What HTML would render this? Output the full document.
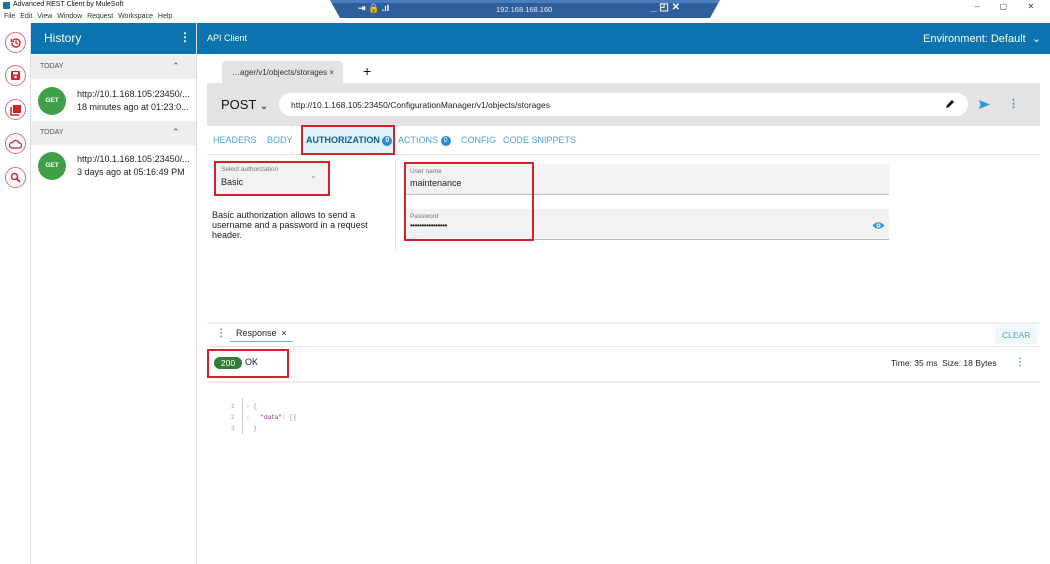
<!DOCTYPE html>
<html><head><style>
*{box-sizing:border-box;margin:0;padding:0}
body{width:1050px;height:564px;position:relative;overflow:hidden;background:#fff;font-family:"Liberation Sans",sans-serif;color:#222}
.a{position:absolute}
.circ{position:absolute;left:5px;width:21px;height:21px;border:1.5px solid #e06a80;border-radius:50%;display:flex;align-items:center;justify-content:center}
.red{position:absolute;border:2px solid #d2232a}
.tab{position:absolute;top:135px;font-size:9px;color:#4aa3d9}
.badge{display:inline-block;width:10px;height:10px;border-radius:50%;background:#2a8ad6;color:#fff;font-size:7px;text-align:center;line-height:10px;vertical-align:middle}
</style></head><body>
<!-- title bar -->
<div class="a" style="left:3px;top:2px;width:7px;height:7px;background:#1b6fa8;border-radius:1px"></div>
<div class="a" style="left:13px;top:1px;font-size:7px;color:#111">Advanced REST Client by MuleSoft</div>
<div class="a" style="left:4px;top:13px;font-size:7px;color:#333;word-spacing:3px">File Edit View Window Request Workspace Help</div>
<svg class="a" style="left:330px;top:0" width="390" height="19"><polygon points="0,0 390,0 380,18 10,18" fill="#2f5e9c"/><polygon points="0,0 390,0 388,3 2,3" fill="#4a7bbd"/></svg>
<div class="a" style="left:358px;top:3px;font-size:9px;color:#fff;font-weight:bold">⇥ 🔒 .ıl</div>
<div class="a" style="left:496px;top:5px;font-size:7.5px;color:#e8eef8">192.168.168.160</div>
<div class="a" style="left:651px;top:2px;font-size:10px;color:#fff;font-weight:bold">_ ◰ ✕</div>
<div class="a" style="left:975px;top:2px;font-size:8px;color:#333;word-spacing:18px">– ▢ ✕</div>
<!-- left rail -->
<div class="a" style="left:30px;top:23px;width:1px;height:541px;background:#ddd"></div>
<div class="circ" style="top:32px"><svg width="12" height="12" viewBox="0 0 12 12"><path d="M2 6a4 4 0 1 0 1.2-2.8M1.5 2v2.5H4M6 3.5V6l2 1" stroke="#d2232a" stroke-width="1.4" fill="none"/></svg></div>
<div class="circ" style="top:65px"><svg width="11" height="11"><rect x="1" y="1" width="9" height="9" rx="1" fill="#d2232a"/><rect x="3" y="2" width="5" height="2.5" fill="#fff"/><circle cx="5.5" cy="7" r="1.3" fill="#fff"/></svg></div>
<div class="circ" style="top:99px"><svg width="12" height="12"><rect x="3" y="1" width="8" height="8" fill="#d2232a"/><path d="M1 3v8h8" stroke="#d2232a" stroke-width="1.5" fill="none"/></svg></div>
<div class="circ" style="top:133px"><svg width="13" height="10"><path d="M3 9h7a2.5 2.5 0 0 0 0-5 3.5 3.5 0 0 0-6.5-.5A2.7 2.7 0 0 0 3 9z" stroke="#d2232a" stroke-width="1.3" fill="none"/></svg></div>
<div class="circ" style="top:167px"><svg width="11" height="11"><circle cx="4.5" cy="4.5" r="3" stroke="#d2232a" stroke-width="1.5" fill="none"/><path d="M7 7l3 3" stroke="#d2232a" stroke-width="1.8"/></svg></div>
<!-- history -->
<div class="a" style="left:31px;top:23px;width:165px;height:31px;background:#0b73ae"></div>
<div class="a" style="left:44px;top:31px;font-size:12px;color:#fff">History</div>
<div class="a" style="left:179px;top:30px;font-size:12px;color:#fff;font-weight:bold">⋮</div>
<div class="a" style="left:31px;top:55px;width:165px;height:24px;background:#eceeef"></div>
<div class="a" style="left:40px;top:63px;font-size:7px;color:#555">TODAY</div>
<div class="a" style="left:172px;top:61px;font-size:9px;color:#444">⌃</div>
<div class="a" style="left:38px;top:87px;width:28px;height:28px;border-radius:50%;background:#3fa048;color:#fff;font-size:6.5px;font-weight:bold;text-align:center;line-height:28px">GET</div>
<div class="a" style="left:77px;top:88px;font-size:9px;line-height:13px;color:#222">http://10.1.168.105:23450/...<br>18 minutes ago at 01:23:0...</div>
<div class="a" style="left:31px;top:121px;width:165px;height:24px;background:#eceeef"></div>
<div class="a" style="left:40px;top:129px;font-size:7px;color:#555">TODAY</div>
<div class="a" style="left:172px;top:127px;font-size:9px;color:#444">⌃</div>
<div class="a" style="left:38px;top:152px;width:28px;height:28px;border-radius:50%;background:#3fa048;color:#fff;font-size:6.5px;font-weight:bold;text-align:center;line-height:28px">GET</div>
<div class="a" style="left:77px;top:153px;font-size:9px;line-height:13px;color:#222">http://10.1.168.105:23450/...<br>3 days ago at 05:16:49 PM</div>
<div class="a" style="left:196px;top:23px;width:1px;height:541px;background:#ddd"></div>
<!-- main header -->
<div class="a" style="left:197px;top:23px;width:853px;height:31px;background:#0b73ae"></div>
<div class="a" style="left:207px;top:33px;font-size:9px;color:#fff">API Client</div>
<div class="a" style="left:923px;top:32px;font-size:11px;color:#fff">Environment: Default &nbsp;⌄</div>
<!-- tabs -->
<div class="a" style="left:222px;top:61px;width:121px;height:23px;background:#e3e3e3;border-radius:4px 4px 0 0"></div>
<div class="a" style="left:232px;top:68px;font-size:8px;color:#333">…ager/v1/objects/storages ×</div>
<div class="a" style="left:363px;top:63px;font-size:14px;color:#111">+</div>
<div class="a" style="left:207px;top:83px;width:833px;height:43px;background:#e3e3e3"></div>
<div class="a" style="left:221px;top:97px;font-size:13px;color:#111">POST <span style="font-size:10px">⌄</span></div>
<div class="a" style="left:279px;top:93px;width:689px;height:23px;background:#fff;border-radius:12px"></div>
<div class="a" style="left:291px;top:100px;font-size:8.5px;color:#222">http://10.1.168.105:23450/ConfigurationManager/v1/objects/storages</div>
<svg class="a" style="left:944px;top:98px" width="12" height="12"><path d="M2 10l1-3 5-5 2 2-5 5z" fill="#111"/></svg>
<svg class="a" style="left:978px;top:99px" width="13" height="11"><path d="M1 1l11 4.5L1 10l1.5-4.5z" fill="#2a9ad6"/></svg>
<div class="a" style="left:1008px;top:97px;font-size:11px;color:#2a9ad6;font-weight:bold">⋮</div>
<div class="tab" style="left:213px">HEADERS</div>
<div class="tab" style="left:267px">BODY</div>
<div class="a" style="left:302px;top:126px;width:92px;height:28px;background:#e3f3fb"></div>
<div class="tab" style="left:306px;color:#0b5e96;font-weight:bold">AUTHORIZATION <span class="badge">0</span></div>
<div class="tab" style="left:398px">ACTIONS <span class="badge">0</span></div>
<div class="tab" style="left:461px">CONFIG</div>
<div class="tab" style="left:503px">CODE SNIPPETS</div>
<div class="a" style="left:207px;top:154px;width:833px;height:1px;background:#e4e4e4"></div>
<div class="red" style="left:301px;top:125px;width:94px;height:30px"></div>
<!-- auth -->
<div class="a" style="left:216px;top:163px;width:113px;height:31px;background:#f2f2f2"></div>
<div class="a" style="left:221px;top:166px;font-size:6.5px;color:#777">Select authorization</div>
<div class="a" style="left:221px;top:177px;font-size:9px;color:#222">Basic</div>
<div class="a" style="left:310px;top:171px;font-size:8px;color:#888">⌄</div>
<div class="red" style="left:214px;top:161px;width:116px;height:35px"></div>
<div class="a" style="left:212px;top:210px;font-size:9px;line-height:10px;color:#222">Basic authorization allows to send a<br>username and a password in a request<br>header.</div>
<div class="a" style="left:395px;top:160px;width:1px;height:90px;background:#e4e4e4"></div>
<div class="a" style="left:405px;top:164px;width:484px;height:31px;background:#f2f2f2;border-bottom:1px solid #bbb"></div>
<div class="a" style="left:410px;top:168px;font-size:6.5px;color:#777">User name</div>
<div class="a" style="left:410px;top:178px;font-size:9px;color:#222">maintenance</div>
<div class="a" style="left:405px;top:209px;width:484px;height:31px;background:#f2f2f2;border-bottom:1px solid #bbb"></div>
<div class="a" style="left:410px;top:213px;font-size:6.5px;color:#777">Password</div>
<div class="a" style="left:410px;top:221px;font-size:8px;color:#222;letter-spacing:-0.5px">••••••••••••••••</div>
<svg class="a" style="left:872px;top:221px" width="13" height="9"><path d="M0.5 4.5Q6.5-2 12.5 4.5Q6.5 11 .5 4.5z" fill="#2a9ad6"/><circle cx="6.5" cy="4.5" r="2" fill="#fff"/><circle cx="6.5" cy="4.5" r="1" fill="#2a9ad6"/></svg>
<div class="red" style="left:404px;top:162px;width:130px;height:79px"></div>
<!-- response -->
<div class="a" style="left:207px;top:322px;width:833px;height:2px;background:#efefef"></div>
<div class="a" style="left:216px;top:328px;font-size:10px;color:#2a9ad6;font-weight:bold">⋮</div>
<div class="a" style="left:236px;top:328px;font-size:9px;color:#222">Response &nbsp;×</div>
<div class="a" style="left:230px;top:341px;width:63px;height:1px;background:#6ab0e0"></div>
<div class="a" style="left:995px;top:324px;width:42px;height:21px;background:#f1f8fc"></div>
<div class="a" style="left:1002px;top:330px;font-size:8.5px;color:#4aa3d9">CLEAR</div>
<div class="a" style="left:207px;top:346px;width:833px;height:1px;background:#e8e8e8"></div>
<div class="a" style="left:214px;top:357px;width:28px;height:12px;border-radius:6px;background:#2e7d32;color:#fff;font-size:8.5px;text-align:center;line-height:12px">200</div>
<div class="a" style="left:245px;top:357px;font-size:9px;color:#222">OK</div>
<div class="red" style="left:207px;top:349px;width:82px;height:29px"></div>
<div class="a" style="left:891px;top:358px;font-size:8.5px;color:#222">Time: 35 ms &nbsp;Size: 18 Bytes</div>
<div class="a" style="left:1015px;top:357px;font-size:10px;color:#2a9ad6;font-weight:bold">⋮</div>
<div class="a" style="left:207px;top:381px;width:833px;height:2px;background:#efefef"></div>
<div class="a" style="left:231px;top:401px;font-size:6px;line-height:11px;color:#999;font-family:'Liberation Mono',monospace">1<br>2<br>3</div>
<div class="a" style="left:242px;top:398px;width:1px;height:36px;background:#ccc"></div>
<div class="a" style="left:246px;top:401px;font-size:6px;line-height:11px;color:#888;font-family:'Liberation Mono',monospace">- {<br>- &nbsp;&nbsp;<span style="color:#a0287a">"data"</span>: []<br>&nbsp;&nbsp;}</div>
</body></html>
